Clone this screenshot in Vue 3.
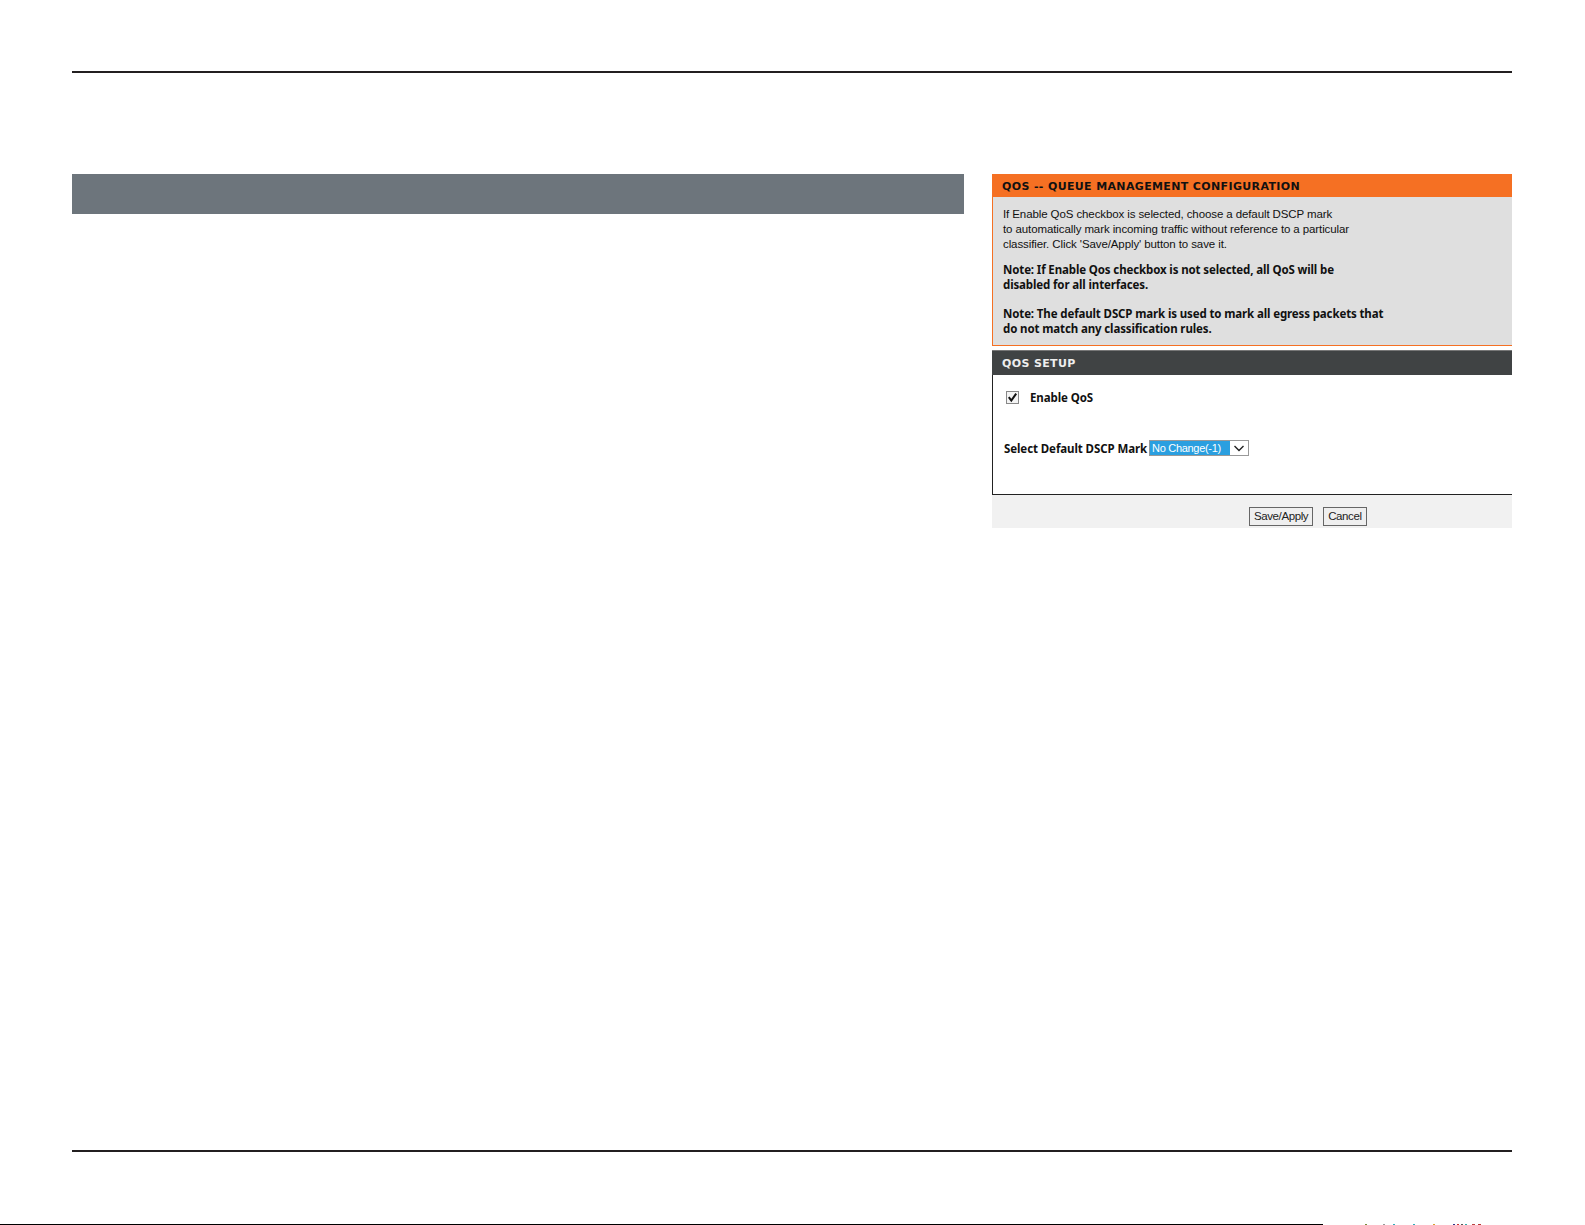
<script setup>
const intro = [
  'If Enable QoS checkbox is selected, choose a default DSCP mark',
  'to automatically mark incoming traffic without reference to a particular',
  "classifier. Click 'Save/Apply' button to save it."
]
const note1 = ['Note: If Enable Qos checkbox is not selected, all QoS will be', 'disabled for all interfaces.']
const note2 = ['Note: The default DSCP mark is used to mark all egress packets that', 'do not match any classification rules.']
const specks = [
  { gap: 42, w: 2, c: '#7a8a3a' }, { gap: 16, w: 2, c: '#999' }, { gap: 8, w: 2, c: '#3ab' },
  { gap: 18, w: 2, c: '#3ab' }, { gap: 18, w: 2, c: '#d9a030' }, { gap: 18, w: 2, c: '#338' },
  { gap: 2, w: 2, c: '#c33' }, { gap: 2, w: 2, c: '#555' }, { gap: 2, w: 2, c: '#3aa' },
  { gap: 5, w: 3, c: '#b44' }, { gap: 3, w: 3, c: '#b33' }
]
</script>

<template>
  <div class="page">
    <div class="rule top"></div>
    <div class="columns">
      <div class="left"></div>
      <div class="right">
        <div class="info">
          <h2 class="head orange">QOS -- QUEUE MANAGEMENT CONFIGURATION</h2>
          <div class="info-body">
            <p v-for="l in intro" :key="l">{{ l }}</p>
            <div class="note first">
              <p v-for="l in note1" :key="l">{{ l }}</p>
            </div>
            <div class="note second">
              <p v-for="l in note2" :key="l">{{ l }}</p>
            </div>
          </div>
        </div>
        <div class="setup">
          <h2 class="head dark">QOS SETUP</h2>
          <div class="setup-body">
            <div class="enable">
              <span class="check">
                <svg width="11" height="11" viewBox="0 0 11 11"><path d="M1.8 5.2 L4.3 8.6 L9.2 1.6" fill="none" stroke="#111" stroke-width="2"/></svg>
              </span>
              <b>Enable QoS</b>
            </div>
            <div class="mark">
              <b>Select Default DSCP Mark</b>
              <span class="select">
                <span class="value">No Change(-1)</span>
                <svg width="18" height="13" viewBox="0 0 18 13"><path d="M4.5 4 L9 8.5 L13.5 4" fill="none" stroke="#222" stroke-width="1.4"/></svg>
              </span>
            </div>
          </div>
        </div>
        <div class="actions">
          <button class="btn">Save/Apply</button>
          <button class="btn">Cancel</button>
        </div>
      </div>
    </div>
    <div class="rule bottom"></div>
    <div class="edge">
      <span class="edge-line"></span>
      <span v-for="(s, i) in specks" :key="i" class="speck" :style="{ marginLeft: s.gap + 'px', width: s.w + 'px', background: s.c }"></span>
    </div>
  </div>
</template>

<style scoped>
.page {
  height: 1225px;
  box-sizing: border-box;
  padding-top: 71px;
  display: flex;
  flex-direction: column;
  background: #fff;
  overflow: hidden;
  font-family: "Liberation Sans", sans-serif;
}
.rule {
  height: 2px;
  background: #231f20;
  margin: 0 73px 0 72px;
}
.columns {
  display: flex;
  align-items: flex-start;
  gap: 28px;
  margin: 101px 73px 0 72px;
}
.left {
  width: 892px;
  height: 40px;
  background: #6d757c;
}
.right {
  flex: 1;
  min-width: 0;
}
p { margin: 0; }
.head {
  margin: 0;
  box-sizing: border-box;
  height: 23px;
  padding: 3px 0 0 10px;
  line-height: 20px;
  font-family: "DejaVu Sans", sans-serif;
  font-size: 11px;
  font-weight: 700;
  letter-spacing: 0.36px;
}
.orange { background: #f57023; color: #111; }
.dark { height: 25px; background: #404344; color: #eee; border-top: 1px solid #777; }
.info-body {
  box-sizing: border-box;
  height: 149px;
  background: #dfdfdf;
  border-left: 1px solid #f57023;
  border-bottom: 1px solid #f57023;
  padding: 10px 0 0 10px;
  font-size: 11.5px;
  letter-spacing: -0.1px;
  line-height: 15px;
  color: #111;
}
.note {
  font-family: "Noto Sans", sans-serif;
  font-size: 11.5px;
  letter-spacing: -0.13px;
  font-weight: 700;
}
.note.first { margin-top: 10px; }
.note.second { margin-top: 14px; }
.setup { margin-top: 4px; }
.setup-body {
  box-sizing: border-box;
  height: 120px;
  border-left: 1px solid #222;
  border-bottom: 1px solid #222;
  font-family: "Noto Sans", sans-serif;
  font-size: 11.5px;
  letter-spacing: -0.09px;
  color: #111;
  padding-left: 11px;
}
.enable {
  display: flex;
  align-items: center;
  padding: 13px 0 0 2px;
  height: 18px;
}
.check {
  box-sizing: border-box;
  width: 13px;
  height: 13px;
  border: 1px solid #888;
  background: #f4f4f4;
  margin-right: 11px;
  display: flex;
  align-items: center;
  justify-content: center;
}
.mark {
  display: flex;
  align-items: center;
  margin-top: 34px;
  height: 16px;
  gap: 2px;
}
.select {
  box-sizing: border-box;
  width: 100px;
  height: 16px;
  border: 1px solid #999;
  display: flex;
  align-items: center;
  background: #fff;
}
.value {
  flex: 1;
  height: 100%;
  background: #2a9fe0;
  color: #fff;
  font-family: "Liberation Sans", sans-serif;
  font-size: 11px;
  letter-spacing: -0.3px;
  line-height: 14px;
  padding-left: 2px;
  white-space: nowrap;
}
.actions {
  box-sizing: border-box;
  height: 33px;
  background: #f1f1f1;
  display: flex;
  align-items: flex-start;
  gap: 10px;
  padding: 12px 0 0 257px;
}
.btn {
  height: 19px;
  padding: 0 4px;
  border: 1px solid #666;
  background: #efefef;
  font-family: "Liberation Sans", sans-serif;
  font-size: 11.5px;
  letter-spacing: -0.4px;
  line-height: 15px;
  color: #222;
  border-radius: 0;
}
.rule.bottom { margin-top: auto; }
.edge {
  display: flex;
  height: 1px;
  margin-top: 72px;
}
.edge-line {
  width: 1323px;
  background: #000;
}
.speck { height: 1px; }
</style>
